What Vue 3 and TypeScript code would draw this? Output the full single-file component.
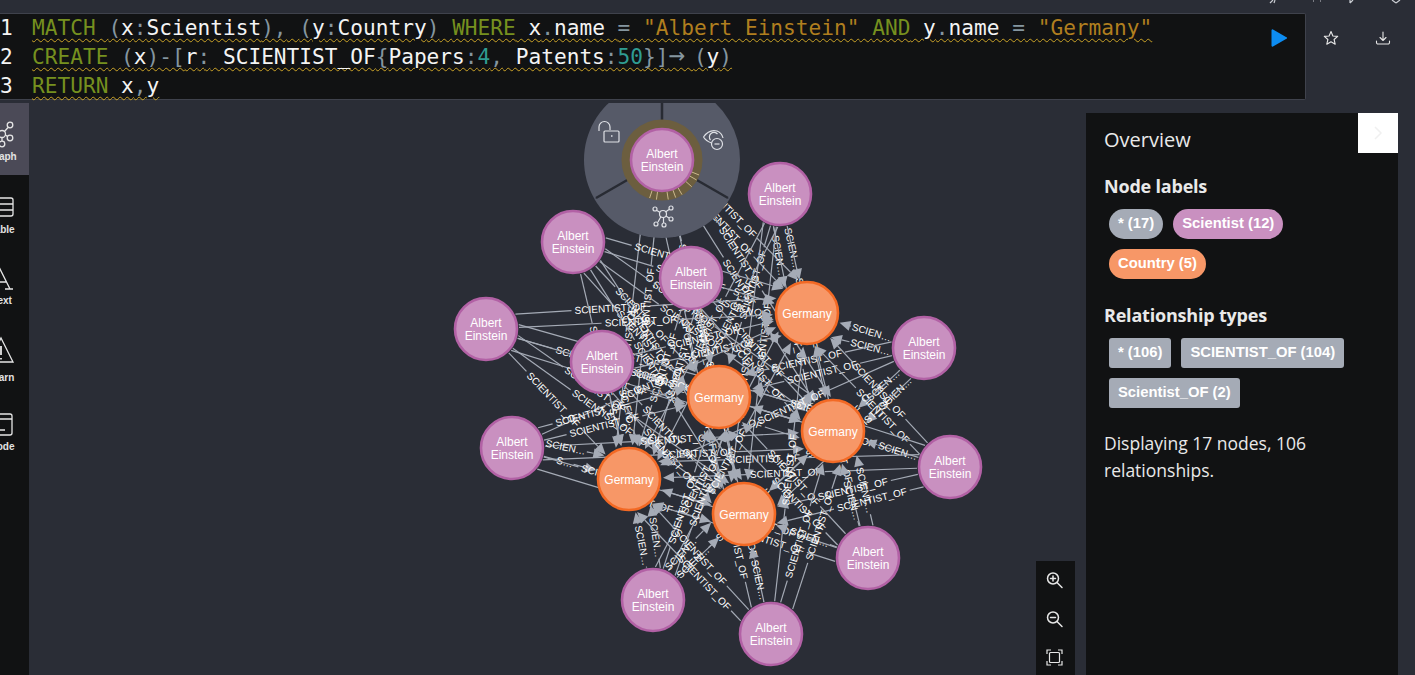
<script setup lang="ts">
interface GraphNode {
  x: number
  y: number
  lines: string[]
  kind: 'scientist' | 'country'
}

const R = 31
const LABEL = 'SCIENTIST_OF'

const ein = ['Albert', 'Einstein']
const scientists: GraphNode[] = [
  [662, 160], [780, 194], [573, 242], [691, 278], [486, 329], [602, 362],
  [924, 348], [512, 448], [950, 467], [868, 558], [653, 600], [771, 634],
].map(([x, y]) => ({ x, y, lines: ein, kind: 'scientist' }))

const countries: GraphNode[] = [
  [807, 313], [719, 397], [833, 431], [629, 479], [744, 514],
].map(([x, y]) => ({ x, y, lines: ['Germany'], kind: 'country' }))

const nodes = [...scientists, ...countries]

const fitLabel = (room: number): string => {
  if (room >= 76) return LABEL
  if (room >= 52) return 'SCIENT…'
  if (room >= 38) return 'SCIEN…'
  return 'S…'
}

// fromTurn / toTurn move the end points round each circle, so that doubled edges fan out
const buildEdge = (a: GraphNode, b: GraphNode, fromTurn: number, toTurn: number, shift: number) => {
  const base = Math.atan2(b.y - a.y, b.x - a.x)
  const sx = a.x + Math.cos(base + fromTurn) * (R + 2)
  const sy = a.y + Math.sin(base + fromTurn) * (R + 2)
  const tx = b.x - Math.cos(base + toTurn) * (R + 3)
  const ty = b.y - Math.sin(base + toTurn) * (R + 3)
  const dx = tx - sx
  const dy = ty - sy
  const len = Math.hypot(dx, dy)
  const ux = dx / len
  const uy = dy / len
  const headX = tx - ux * 11
  const headY = ty - uy * 11
  const inner = len - 11
  const text = fitLabel(inner - 6)
  const half = (text === LABEL ? 72 : text.length * 6.2) / 2 + 3
  const mid = inner * (0.5 + shift)
  const m1 = Math.max(half, Math.min(inner - half, mid))
  const mx = sx + ux * m1
  const my = sy + uy * m1
  let angle = (Math.atan2(dy, dx) * 180) / Math.PI
  if (angle > 90) angle -= 180
  if (angle < -90) angle += 180
  return {
    segA: `M${sx} ${sy}L${mx - ux * half} ${my - uy * half}`,
    segB: `M${mx + ux * half} ${my + uy * half}L${headX} ${headY}`,
    head: `${tx},${ty} ${headX - uy * 5},${headY + ux * 5} ${headX + uy * 5},${headY - ux * 5}`,
    text,
    label: `translate(${mx} ${my}) rotate(${angle})`,
  }
}

// 60 first edges, the rest doubled, 106 in all
const edges = scientists.flatMap((s, i) =>
  countries.flatMap((c, j) => {
    const first = buildEdge(s, c, 0, 0, ((i + j * 2) % 3) * 0.04 - 0.04)
    const side = (i + j) % 2 ? 1 : -1
    return (i * 7 + j * 3) % 13 < 10
      ? [first, buildEdge(s, c, side * 0.42, side * -0.5, 0.12 * side)]
      : [first]
  }),
).slice(0, 106)

const sel = scientists[0]
const ticks = [-68, -60, -48, -30, -20, -9, 8, 18].map((deg) => {
  const a = ((90 + deg) * Math.PI) / 180
  return {
    x1: sel.x + Math.cos(a) * 32,
    y1: sel.y + Math.sin(a) * 32,
    x2: sel.x + Math.cos(a) * 40,
    y2: sel.y + Math.sin(a) * 40,
  }
})

const nav = ['Graph', 'Table', 'Text', 'Warn', 'Code']
const nodePills = [
  { text: '* (17)', cls: 'grey' },
  { text: 'Scientist (12)', cls: 'purple' },
  { text: 'Country (5)', cls: 'orange' },
]
const relPills = ['* (106)', 'SCIENTIST_OF (104)', 'Scientist_OF (2)']
</script>

<template>
  <div class="page">
    <svg class="window-bits" width="170" height="6" viewBox="0 0 170 6" fill="none" stroke="#c9ccd2" stroke-width="1.2">
      <path d="M30 3 33 0M35 0 34 3" />
      <path d="M73 1h1M80 1h1" />
      <path d="M110 0v3M113 0l-3 3" />
      <path d="M152 0l4 3M160 0l-4 3" />
    </svg>

    <div class="top">
      <div class="editor">
        <div class="gutter"><div>1</div><div>2</div><div>3</div></div>
        <div class="code">
          <div class="line"><span class="kw">MATCH</span> <span class="pn">(</span>x<span class="pn">:</span>Scientist<span class="pn">),</span> <span class="pn">(</span>y<span class="pn">:</span>Country<span class="pn">)</span> <span class="kw">WHERE</span> x<span class="pn">.</span>name <span class="pn">=</span> <span class="str">"Albert Einstein"</span> <span class="kw">AND</span> y<span class="pn">.</span>name <span class="pn">=</span> <span class="str">"Germany"</span></div>
          <div class="line"><span class="kw">CREATE</span> <span class="pn">(</span>x<span class="pn">)-[</span>r<span class="pn">:</span> SCIENTIST_OF<span class="pn">{</span>Papers<span class="pn">:</span><span class="num">4</span><span class="pn">,</span> Patents<span class="pn">:</span><span class="num">50</span><span class="pn">}]</span><span class="pn arrow">→</span><span class="pn">(</span>y<span class="pn">)</span></div>
          <div class="line"><span class="kw">RETURN</span> x<span class="pn">,</span>y</div>
        </div>
        <svg class="play" width="16" height="20" viewBox="0 0 16 20">
          <path d="M2 1.500 15 9a1 1 0 0 1 0 2L2 18.500a1 1 0 0 1-1.500-1V2.500A1 1 0 0 1 2 1.500z" fill="#0d8cf1" />
        </svg>
      </div>
      <div class="actions">
        <svg width="16" height="16" viewBox="0 0 16 16" fill="none" stroke="#e8e8e8" stroke-width="1.1" stroke-linejoin="round">
          <path d="M8 1.500 9.900 6l4.800.4-3.600 3.100 1.100 4.700L8 11.700l-4.200 2.500 1.100-4.700L1.300 6.400 6.100 6z" />
        </svg>
        <svg width="16" height="16" viewBox="0 0 16 16" fill="none" stroke="#e8e8e8" stroke-width="1.1" stroke-linecap="round" stroke-linejoin="round">
          <path d="M8 2v8M5 7.500 8 10.500l3-3M1.500 11v1.500a1.500 1.500 0 0 0 1.500 1.500h10a1.500 1.500 0 0 0 1.500-1.500V11" />
        </svg>
      </div>
    </div>

    <div class="main">
      <nav class="sidebar">
        <div v-for="(item, i) in nav" :key="item" class="nav-item" :class="{ active: i === 0 }">
          <svg width="40" height="28" viewBox="0 0 40 28" fill="none" stroke="#e6e6e6" stroke-width="1.300">
            <g v-if="i === 0">
              <circle cx="17" cy="14" r="3.500" /><circle cx="25" cy="5" r="2.800" /><circle cx="25" cy="18" r="2.800" />
              <circle cx="17" cy="24" r="2.800" /><circle cx="9" cy="6" r="2.800" /><circle cx="9" cy="21" r="2.800" />
              <path d="M19.500 11.500 23 7.500M20.500 15l2 1.500M17 17.500V21M14.500 11.500l-3.500-3.500M14.500 16.500l-3.500 3" />
            </g>
            <g v-else-if="i === 1">
              <rect x="6" y="5" width="22" height="18" rx="2" /><path d="M6 11h22M6 17h22M13 5v18" />
            </g>
            <path v-else-if="i === 2" d="M5 25 15 5 25 25M8 18h14M1 25h7M20 25h8" />
            <g v-else-if="i === 3">
              <path d="M16 3 28 27H4z" /><path d="M16 11v9M16 23v1.500" stroke-width="1.800" />
            </g>
            <g v-else>
              <rect x="4" y="4" width="23" height="21" rx="2" /><path d="M4 9h23M14 20h6" />
            </g>
          </svg>
          <span>{{ item }}</span>
        </div>
      </nav>

      <div class="canvas">
        <svg class="graph" width="1057" height="572" viewBox="29 103 1057 572">
          <g v-for="(e, i) in edges" :key="i">
            <path :d="e.segA" class="edge" />
            <path :d="e.segB" class="edge" />
            <polygon :points="e.head" class="head" />
            <text :transform="e.label" class="edge-label" y="3.500">{{ e.text }}</text>
          </g>

          <g class="menu">
            <path d="M662 160 L662 82 A78 78 0 0 1 729.550 199 Z" />
            <path d="M662 160 L729.550 199 A78 78 0 0 1 594.450 199 Z" />
            <path d="M662 160 L594.450 199 A78 78 0 0 1 662 82 Z" />
          </g>
          <path class="divider" d="M662 100V122M695 179l33 19M629 179l-33 19" />
          <circle cx="662" cy="160" r="36" fill="none" stroke="#6c5e3f" stroke-width="9" />
          <line v-for="(t, i) in ticks" :key="i" v-bind="t" stroke="#cbb98c" stroke-width="1" />

          <g fill="none" stroke="#dfe1e6" stroke-width="1.200">
            <rect x="604" y="131" width="15" height="11" rx="1" />
            <path d="M599 131v-4a5.500 5.500 0 0 1 11 0v3" />
            <path d="M611 136h1.500" stroke-width="1.500" />
            <path d="M703.500 137Q709 129 717 131Q722 133 723 138M703.500 137Q706 141 711.500 143" />
            <path d="M710.500 140a4.500 4.500 0 0 1 7-6" />
            <circle cx="717" cy="144" r="5.500" />
            <path d="M714.500 144h5" />
            <circle cx="663" cy="214" r="3.500" />
            <circle cx="655" cy="209" r="2" /><circle cx="671" cy="208" r="2" />
            <circle cx="656" cy="224" r="2" /><circle cx="664" cy="225" r="2" />
            <circle cx="671" cy="219" r="2" />
            <path d="M657 210.500l3 2M669 209.500l-3.500 2.500M658 222l3-5.500M663.500 223v-5.500M669 218l-3-2" />
          </g>

          <g v-for="(n, i) in nodes" :key="i" :class="n.kind">
            <circle :cx="n.x" :cy="n.y" :r="R" class="disc" />
            <text
              v-for="(t, k) in n.lines"
              :key="k"
              :x="n.x"
              :y="n.y + 4.500 + (k - (n.lines.length - 1) / 2) * 12.500"
              class="node-label"
            >{{ t }}</text>
          </g>
        </svg>

        <div class="zoom">
          <svg width="18" height="18" viewBox="0 0 18 18" fill="none" stroke="#e6e6e6" stroke-width="1.500" stroke-linecap="round">
            <circle cx="7" cy="7.500" r="5.500" /><path d="M11 11.500 16 16.500M4.500 7.500h5M7 5v5" />
          </svg>
          <svg width="18" height="18" viewBox="0 0 18 18" fill="none" stroke="#e6e6e6" stroke-width="1.500" stroke-linecap="round">
            <circle cx="7" cy="7.500" r="5.500" /><path d="M11 11.500 16 16.500M4.500 7.500h5" />
          </svg>
          <svg width="18" height="18" viewBox="0 0 18 18" fill="none" stroke="#e6e6e6" stroke-width="1.200">
            <rect x="3.500" y="3.500" width="10" height="10" rx="1" />
            <path d="M1 5V1H5M12 1h4V5M16 12v4H12M5 16H1V12" />
          </svg>
        </div>
      </div>

      <aside class="panel">
        <button class="collapse" type="button">
          <svg width="10" height="16" viewBox="0 0 10 16" fill="none" stroke="#f0f0f0" stroke-width="1.500"><path d="M2 2l6 6-6 6" /></svg>
        </button>
        <h2 class="title">Overview</h2>
        <h3 class="heading">Node labels</h3>
        <div class="pills">
          <span v-for="p in nodePills" :key="p.text" class="pill" :class="p.cls">{{ p.text }}</span>
        </div>
        <h3 class="heading rel">Relationship types</h3>
        <div class="pills">
          <span v-for="p in relPills" :key="p" class="pill rect">{{ p }}</span>
        </div>
        <p class="summary">Displaying 17 nodes, 106 relationships.</p>
      </aside>
    </div>
  </div>
</template>

<style>
html,
body {
  margin: 0;
  background: #2a2d36;
  overflow: hidden;
}
</style>

<style scoped>
.page {
  position: relative;
  width: 1415px;
  height: 675px;
  overflow: hidden;
  background: #2a2d36;
  font-family: "Open Sans", "Liberation Sans", sans-serif;
}

.window-bits {
  position: absolute;
  top: 0;
  right: 5px;
}

.top {
  display: flex;
  align-items: flex-start;
  padding-top: 13px;
}

.editor {
  display: flex;
  align-items: center;
  box-sizing: border-box;
  width: 1306px;
  height: 87px;
  background: #111213;
  border: 1px solid #3f424c;
  border-left: 0;
  border-radius: 0 2px 2px 0;
  font-family: "DejaVu Sans Mono", monospace;
  font-size: 21.150px;
  line-height: 29px;
  color: #f4f4f4;
}

.gutter {
  width: 32px;
  flex: none;
}

.code {
  flex: 1;
  white-space: pre;
}

.line {
  height: 29px;
  text-decoration: underline wavy #c9a227 1px;
  text-underline-offset: 3px;
  width: fit-content;
}

.kw { color: #76901f; }
.str { color: #b07f1f; }
.num { color: #2f9c92; }
.pn { color: #8596a0; }
.arrow { font-size: 1.300em; line-height: 0; letter-spacing: 0.32em; }

.play {
  flex: none;
  align-self: flex-start;
  margin: 14px 18px 0 0;
}

.actions {
  display: flex;
  gap: 36px;
  padding: 17px 0 0 17px;
}

.main {
  display: flex;
  height: 572px;
  margin-top: 3px;
}

.sidebar {
  flex: none;
  width: 29px;
  overflow: hidden;
  background: #111213;
}

.nav-item {
  display: flex;
  flex-direction: column;
  align-items: center;
  justify-content: flex-end;
  box-sizing: border-box;
  width: 70px;
  height: 73px;
  margin-left: -30px;
  padding-bottom: 13px;
  gap: 3px;
  color: #e2e2e2;
  font: bold 10px "Liberation Sans", sans-serif;
}

.nav-item span {
  position: relative;
  left: -3px;
}

.nav-item svg { flex: none; }

.nav-item.active { background: #4b4a57; height: 72px; }
.nav-item:nth-child(3) { height: 71px; }
.nav-item:nth-child(4) { height: 77px; gap: 9px; }
.nav-item:nth-child(5) { height: 69px; }

.canvas {
  position: relative;
  flex: none;
  width: 1057px;
  height: 572px;
  overflow: hidden;
}

.graph { display: block; }

.edge {
  fill: none;
  stroke: #a5abb6;
  stroke-width: 1.200;
}

.head { fill: #a5abb6; }

.edge-label {
  fill: #fff;
  font: 10px "Liberation Sans", sans-serif;
  text-anchor: middle;
}

.menu path { fill: #565a68; }

.divider {
  fill: none;
  stroke: #282b33;
  stroke-width: 2.500;
}

.scientist .disc {
  fill: #c990c0;
  stroke: #b261a5;
  stroke-width: 2.600;
}

.country .disc {
  fill: #f79767;
  stroke: #f36924;
  stroke-width: 2.600;
}

.node-label {
  fill: #fff;
  font: 12px "Liberation Sans", sans-serif;
  text-anchor: middle;
}

.zoom {
  position: absolute;
  right: 11px;
  bottom: 0;
  display: flex;
  flex-direction: column;
  align-items: center;
  gap: 21px;
  width: 39px;
  height: 114px;
  padding: 10px 2px 0 0;
  box-sizing: border-box;
  background: #111213;
}

.panel {
  position: relative;
  flex: none;
  box-sizing: border-box;
  width: 312px;
  margin-top: 10px;
  padding: 13px 18px;
  background: #111213;
  color: #e9e9e9;
}

.collapse {
  position: absolute;
  top: 0;
  right: 0;
  width: 40px;
  height: 40px;
  padding: 0;
  border: 0;
  background: #fff;
  display: flex;
  align-items: center;
  justify-content: center;
}

.title {
  margin: 0;
  font-size: 20px;
  font-weight: 400;
  line-height: 27px;
}

.heading {
  margin: 21px 0 0;
  font-size: 18px;
  font-weight: 700;
  line-height: 25px;
  letter-spacing: -0.2px;
}

.heading.rel { margin-top: 24px; }

.pills {
  display: flex;
  flex-wrap: wrap;
  gap: 10px;
  width: 250px;
  margin: 10px 0 0 5px;
}

.pill {
  display: block;
  height: 30px;
  padding: 0 9px;
  border-radius: 15px;
  color: #fff;
  font: bold 14.800px/29px "Liberation Sans", sans-serif;
  white-space: nowrap;
}

.pill.grey, .pill.rect { background: #a5abb6; }
.pill.purple { background: #c990c0; }
.pill.orange { background: #f79767; }
.pill.rect { border-radius: 3px; }

.summary {
  margin: 22px 0 0;
  font-size: 17.500px;
  line-height: 27px;
  width: 240px;
}
</style>
